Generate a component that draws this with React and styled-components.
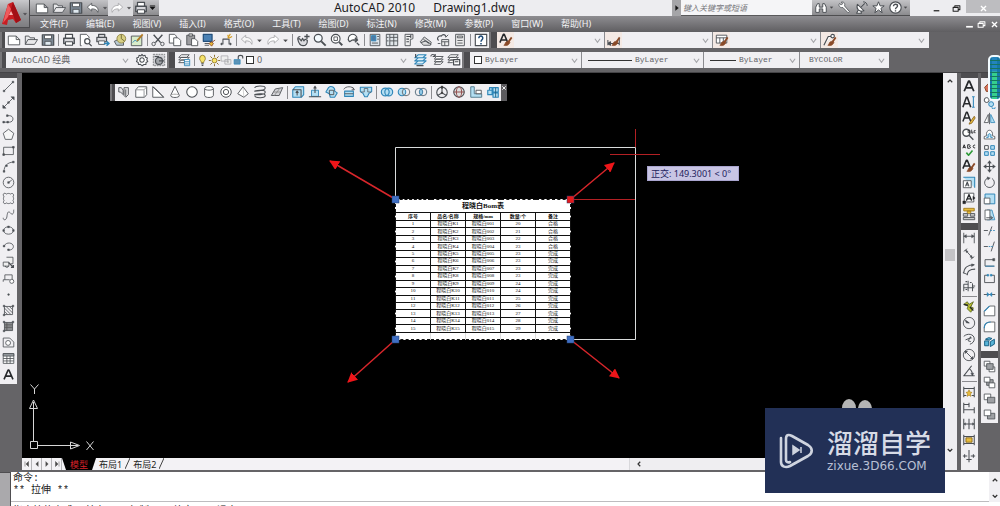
import React from "react";
import styled, { createGlobalStyle, css } from "styled-components";

const INK = "#4b4f54";
const BLUE = "#2f86b8";
const SKY = "#b5dff3";
const BROWN = "#8a4a28";
const GOLD = "#e9bd3c";
const CHROME = "#656467";
const PANEL = "#f0eff2";

const GlobalStyle = createGlobalStyle`
  * { box-sizing: border-box; }
  body {
    margin: 0;
    background: ${CHROME};
    font-family: "Noto Sans", "Noto Sans CJK SC", sans-serif;
    font-size: 9px;
    color: #222;
  }
  button, input, select {
    font: inherit;
    color: inherit;
    margin: 0;
    padding: 0;
    border: 0;
    border-radius: 0;
    background: none;
  }
`;

/* ---------- icons: lists of [path, stroke, fill, stroke width] ---------- */

const brush = [
  ["M14.5 5 11 10", BROWN, "none", 2],
  ["M11.500 9 8.500 10c-2 1-1 3-3 4 3 1 6 0 7-3.500z", BROWN, BROWN, 0.8],
];

const ICONS = {
  newFile: [["M1.500 3.500h9l4 4v6h-13zM10.500 3.500v4h4", INK, "#fff"]],
  open: [["M1.500 13V3.500h4l1.500 2h5v2M1.500 13l3-5.500h11L12 13z", INK, "#e8e8ea"]],
  save: [
    ["M1.500 2h13v12h-13z", INK, "#7b8793", 1.4],
    ["M4 2.500h8v4H4z", INK, "#fff"],
    ["M4.500 9.500h7V14h-7z", INK, "#dfe9f0"],
  ],
  print: [
    ["M4 6V1.500h8V6", INK, "#fff", 1.4],
    ["M2 6h12v6H2z", INK, "#d8d8dc", 1.6],
    ["M4 10h8v4H4z", INK, "#fff", 1.2],
  ],
  preview: [
    ["M3 14.500H1.500v-13h7l3 3V6", INK, "#fff"],
    ["M12.500 9.500a3 3 0 1 1-6 0 3 3 0 0 1 6 0zM11.500 12l3 3", INK, "#fff", 1.4],
  ],
  publish: [
    ["M3 5V1.500h7V5M1 5h11v5H1z", INK, "#d8d8dc", 1.4],
    ["M3 9h7v4H3z", INK, "#fff"],
    ["M9 12h5M12 9.500l3 2.500-3 2.500", BLUE, "none", 1.6],
  ],
  globe: [
    ["M1.500 9.500 7 7l5 2v5H4z", INK, "#b9c9d2"],
    ["M14.500 6.500a5 5 0 1 1-10 0 5 5 0 0 1 10 0z", "#8f8241", "#d8d084"],
    ["M9.500 1.500v5l4 3", "#6d6733", "none"],
  ],
  sheet: [
    ["M1.500 3.500h12v11h-12z", INK, "#d9ecc9"],
    ["M3 11l3-3 2 2 3-3", BLUE, "none"],
    ["M14.500 1.500 8 9", "#b37c26", "none", 2],
  ],
  cut: [
    ["M3 2l8 9M13 2l-8 9", INK, "none", 1.6],
    ["M5 12.500a2 2 0 1 1-4 0 2 2 0 0 1 4 0zM15 12.500a2 2 0 1 1-4 0 2 2 0 0 1 4 0z", INK, "none"],
  ],
  copy: [
    ["M1.500 1.500h6l2 2v8h-8z", INK, "#fff"],
    ["M6.500 5.500h5l3 3v6h-8z", INK, "#fff"],
  ],
  paste: [
    ["M2 2.500h9v11H2z", INK, "#9c9c9f"],
    ["M4.500 1h4v2.500h-4z", INK, "#ddd"],
    ["M7.500 6.500h4l3 3v5h-7z", INK, "#fff"],
  ],
  match: [
    ["M1.500 1.500h10v8h-10z", "#24507c", "#4b81b4", 1.4],
    ["M3 12h5M3 14h5", INK, "none"],
    ["M15 8l-4 3M8 12l3-2 2 2-2 3z", BROWN, GOLD],
  ],
  block: [
    ["M1.500 12.500h3V7h7v5.500h3", INK, "none", 1.2],
    ["M3 11v3M13 11v3", INK, "none", 1.2],
    ["M13 1l-3 5M15 4l-4 2M10 2l1 4", "#d39b1f", "none", 1.2],
  ],
  undo: [["M6.500 2.500 1.500 7l5 4.500V9c4 0 6 1 7 4 1.500-5-2-8-7-8z", "#55585c", "#fff"]],
  redo: [["M9.500 2.500 14.500 7l-5 4.500V9c-4 0-6 1-7 4-1.500-5 2-8 7-8z", "#a8a8ac", "#fff"]],
  undoDim: [["M6.500 2.500 1.500 7l5 4.500V9c4 0 6 1 7 4 1.500-5-2-8-7-8z", "#a8a8ac", "#f6f6f6"]],
  pan: [
    ["M2 7c0-2 1-3 3-3M2 7c1 5 3 7.500 6 7.500 4 0 5-3 5-6L10.500 7 9 9 7.500 6 6 9 4 6.500z", INK, "#dcdce0", 1.3],
    ["M12.500 1v6M9.500 4h6", INK, "none", 1.5],
  ],
  zoom: [
    ["M10.500 6a4.500 4.500 0 1 1-9 0 4.500 4.500 0 0 1 9 0z", INK, "#f5fbff", 1.4],
    ["M9.500 9.500 14.500 14.500", INK, "none", 2.2],
  ],
  zoomWin: [
    ["M11.500 6.500a5 5 0 1 1-10 0 5 5 0 0 1 10 0z", INK, "#fff", 1.3],
    ["M4.500 4.500h4v4h-4z", INK, "none"],
    ["M10.500 10.500 14 14", INK, "none", 2.2],
  ],
  zoomPrev: [
    ["M11.500 6.500a5 5 0 1 0-9 3M1 7l2 3 3-2", INK, "#fff", 1.3],
    ["M6 8h6M9 5.500 12 8l-3 2.500M11 11l3 3", INK, "none", 1.6],
  ],
  props: [
    ["M2.500 1.500h11v13h-11z", INK, "#dbe3ea"],
    ["M4 3h5v6H4z", BLUE, "#4d7aa5"],
    ["M10.500 4h2M10.500 7h2M4.500 11.500h7", INK, "none"],
  ],
  center: [
    ["M1.500 1.500h13v13h-13z", INK, "#dfe4e8"],
    ["M5.500 1.500v13M5.500 5h9M5.500 9h9M10 1.500v13M2 5h2M2 9h2", INK, "none"],
  ],
  palette: [
    ["M3.500 1.500h9v5l-3 1v7h-6z", INK, "#eee"],
    ["M5 4h5M5 7h3M5 10h3M10 2v4", INK, "none", 1.2],
  ],
  sheetset: [
    ["M1.500 10 6 4.500l8 6-1 3.500H5z", INK, "#ddd"],
    ["M2 11l6-2 6 4M5 7l6 5", INK, "none", 1.1],
  ],
  markup: [
    ["M3 8.500c-3-2 0-6 3-5 2-3 6-1 5 1", INK, "none", 1.3],
    ["M6.500 7.500h8v7h-8zM6.500 10h8M10 10v4.500", INK, "#eee"],
    ["M11 5l3-3M2 12h3", INK, "none"],
  ],
  calc: [
    ["M3 1.500h10v13H3z", INK, "#eee"],
    ["M5 3.500h6v2H5zM5 8.500h6M5 11.500h6", INK, "none"],
  ],
  help: [
    ["M1.500 1.500h13v13h-13z", INK, "#fff", 1.3],
    ["M5.500 6c0-3.500 5-3 4.500 0C10 7.500 8 8 8 10M8 11.500v1.500", "#1f4b78", "none", 1.7],
  ],
  textStyle: [["M1 11 5 1.500h1L10 11M2.500 8h6", "#26282b", "none", 1.8], ...brush],
  dimStyle: [["M1 14V8M1 12h13M14 14V6M1 12l3-2v4z", INK, "none", 1.2], ...brush],
  tableStyle: [["M1.500 2.500h12v9h-12zM1.500 5.500h12M5.500 5.500v6M9.500 5.500v6", INK, "#fff"], ...brush],
  leaderStyle: [["M1 14 6 4h3M13 3.500a2 2 0 1 1-4 0 2 2 0 0 1 4 0z", INK, "#fff", 1.3], ...brush],
  gear: [
    ["M8 1.500l1.200 1.800 2.300-.6.500 2.200 2.200.8-.8 2 1.200 2-2 1.200-.1 2.300-2.300-.1L8 14.500l-1.800-1.500-2.300.2-.2-2.300-2-1.200 1-2-.8-2 2.200-.8.5-2.200 2.200.6z", INK, "#fff", 1.2],
    ["M10.500 8a2.500 2.500 0 1 1-5 0 2.500 2.500 0 0 1 5 0z", INK, "none", 1.2],
  ],
  workspace: [
    ["M1.500 1.500h13v13h-13z", "#77797c", "#d0d0d4", 1, "2 1"],
    ["M12 9a4 4 0 1 1-8 0 4 4 0 0 1 8 0zM3 4h5M8 9h6", INK, "#a4a7ab", 1.3],
  ],
  layers: [
    ["M5 2h9l-3 3H2zM5 5h9l-3 3H2zM5 8h6l-3 3H2z", INK, "#fff"],
    ["M8.500 7.500h6v7h-6zM8.500 10h6M8.500 12.500h6", BLUE, "#fff"],
  ],
  layerMake: [["M6 2h9l-4 3.500H2zM6 5.500h9L11 9H2zM6 9h9l-4 3.500H2z", BLUE, "#dff0f8", 1.2], ["M4 14.500h8M3 1v4", INK, "none", 1.3]],
  layerPrev: [["M7 4h8l-3 3H5zM7 7h8l-3 3H5zM7 10h8l-3 3H5z", INK, "#fff"], ["M1 4c0-3 4-3 5 0M6 1v3H3", INK, "none", 1.2]],
  layerState: [["M4 2h9l-3 3H1zM4 5h9l-3 3H1zM4 8h5l-3 3H1z", INK, "#fff"], ["M7.500 7.500h7v6h-7zM9 10h4", INK, "#fff", 1.4]],
  bulb: [["M11.500 5.500c0 2.500-2 3-2 5h-3c0-2-2-2.500-2-5a3.500 4 0 0 1 7 0z", "#877325", "#f6e36b"], ["M6.500 12h3M7 14h2", INK, "none", 1.4]],
  sun: [["M11 8a3 3 0 1 1-6 0 3 3 0 0 1 6 0z", "#8c6e1b", "#f6e36b"], ["M8 1v2.500M8 12.500V15M1 8h2.500M12.500 8H15M3 3l2 2M11 11l2 2M13 3l-2 2M5 11l-2 2", "#82621b", "none", 1.1]],
  vpFreeze: [["M1.500 2.500h9v7h-9zM6.500 7.500h8v6h-8z", "#a5a5a9", "#eee"], ["M9 10.500h3M10.500 9v3", "#aaa", "none"]],
  lock: [["M1.500 7.500h8v6h-8z", BLUE, "#5c93b7"], ["M7 7V4c0-3 6-3 6 0v2", INK, "none", 1.5]],
  line: [["M2.500 13.500 13.500 2.500", INK, "none"], ["M1.500 12.500h2v2h-2zM12.500 1.500h2v2h-2z", INK, INK, 0.6]],
  xline: [["M2 14 14 2", INK, "none"], ["M1 15v-4l4 4zM15 1v4l-4-4zM7 7h2v2H7z", INK, INK, 0.6]],
  pline: [["M2 12.500h7c6 0 6-8 0-8H7", INK, "none"], ["M1 11.500h2v2H1zM6 11.500h2v2H6zM5.500 3.500h2v2h-2z", INK, INK, 0.6]],
  polygon: [["M8 1.500 14.500 6.500 12 14H4L1.500 6.500z", INK, "#f6f6f6"]],
  rect: [["M2 4h12v9H2z", INK, "none"], ["M1 12h2v2H1zM13 3h2v2h-2z", INK, INK, 0.8]],
  arc: [["M2.500 14C2.500 8 6 3 14 2.500", INK, "none"], ["M1.500 13h2v2h-2zM4.500 6h2v2h-2zM13 1.500h2v2h-2z", INK, INK, 0.6]],
  circle: [["M14.500 8a6.500 6.500 0 1 1-13 0 6.500 6.500 0 0 1 13 0zM8 8l4-3", INK, "none"], ["M7 7h2v2H7z", INK, INK, 0.6]],
  cloud: [["M2.500 6C0 2 3 .5 5.500 2.500 7 1.500 9 1.500 10.500 2.500 13 .5 15.500 3 13.500 6c1 1 1 3 0 4.500 2 3-.5 5-3 3-1.500 1-3.500 1-5 0-2.500 2-5 0-3-3-1-1.500-1-3.500 0-4.500z", INK, "none"]],
  spline: [["M1.500 12c0 4 4 3 4.500-1S7 4 9 5s3 4 4.500 2S14 4 14.500 2", INK, "none"]],
  ellipse: [["M14 8c0 6-12 6-12 0s12-6 12 0z", INK, "none"], ["M1 7h2v2H1zM13 7h2v2h-2zM7 2.500h2v2H7z", INK, INK, 0.6]],
  ellArc: [["M3 7c2-5 11-4 11 1 0 4-5 5-7 4", INK, "none"], ["M1.500 6.500h2v2h-2zM7 11h2v2H7z", INK, INK, 0.6]],
  insert: [["M5.500 1.500h8v8h-3M1.500 7.500h7v5h-7z", INK, "#eee"], ["M8 8l6 6M14 11v3h-3", INK, "none", 1.6], ["M4 12a2 2 0 1 0 4 0", INK, "none"]],
  makeBlock: [["M3.500 3.500h9v6M1.500 12V9.500h8M3.500 3.500v6", INK, "none"], ["M14.500 11.500a2.500 2.500 0 1 1-5 0 2.500 2.500 0 0 1 5 0z", INK, "#fff"]],
  point: [["M7.300 7.300h1.500v1.500H7.300z", INK, INK]],
  hatch: [["M3 3h10v10H3zM3 9l4 4M3 5l8 8M5 3l8 8M9 3l4 4", INK, "none"], ["M1.500 1.500h2v2h-2zM12.500 1.500h2v2h-2zM1.500 12.500h2v2h-2z", INK, INK, 0.6]],
  gradient: [["M3 3h10v10H3z", INK, "#8b8d90"], ["M3 6h10M3 9h10M6 3v10", "#555", "none"], ["M1.500 1.500h2v2h-2zM12.500 1.500h2v2h-2zM1.500 12.500h2v2h-2z", INK, INK, 0.6]],
  region: [["M1.500 2.500h8l5 5v6h-13z", INK, "none"], ["M10.500 8.500a3 3 0 1 1-6 0 3 3 0 0 1 6 0z", INK, "#fff"]],
  table: [["M1.500 2h13v12h-13zM1.500 8h13M1.500 11h13M6 5v9M10 5v9", INK, "#fff"], ["M1.500 2h13v3h-13z", INK, "#9ba0a5"]],
  mtext: [["M2.500 14 7.500 2.500h1l5 11.500M4.500 10h7", "#26282b", "none", 2]],
  stext: [["M1 14 5 2.500h1l4 11.500M2.500 10h6", "#26282b", "none", 1.8], ["M13 2.500v11M11.500 2h3M11.500 14h3", BLUE, "none", 1.2]],
  editText: [["M1 12 5 1.500h1L10 12M2.500 8h6", "#26282b", "none", 1.7], ["M14 6 9 13l-1 2 3-1 4-6z", "#8a6420", GOLD, 1]],
  findText: [["M9 6.500a4 4 0 1 1-8 0 4 4 0 0 1 8 0zM8 9.500l5 5", INK, "#fff", 1.6], ["M7 6.500h2v-3H7zM11 3v4h1.500V5M15.500 4h-1.500v2.500h1.500", "#26282b", "none", 0.9]],
  spell: [["M1 6l1.500-4L4 6M1.500 5h2M6.500 2v4h2c2 0 1-2 0-2 1 0 1-2 0-2zM15 2.500c-3-1-3 4 0 3", "#26282b", "none", 1.1], ["M5 11l2.500 3L12 8.500", "#2e9a38", "none", 1.8]],
  scaleText: [["M1.500 2.500h13v12", BLUE, SKY, 1.2], ["M1.500 6.500h9v8h-9z", INK, "#fff"], ["M4 13l2-5 2 5M4.500 11.500h3", INK, "none", 1.2]],
  justify: [["M2.500 2.500h11v10h-11z", INK, "#fff"], ["M5 11l3-7 3 7M6 9h4", "#26282b", "none", 1.5], ["M1 11.500h3v3H1zM12.500 6 15 8l-2.500 2z", "#26282b", "#26282b", 0.5]],
  convert: [["M2 1.500h12v3H2zM6 4.500h4v3H6z", "#a07a1f", GOLD], ["M1.500 7.500h5v3h-5zM9.500 7.500h5v3h-5zM1.500 12h13v2.500h-13z", INK, "#ccc"]],
  dimLinear: [["M2 2v12M14 2v12M2 6h12", INK, "none"], ["M2 6l3-2v4zM14 6l-3-2v4z", INK, INK, 0.4]],
  dimAligned: [["M2 5l4-3M10 14l4-3M4 3.500 12 12.500", INK, "none"], ["M4 3.500l1 3 2-1.500zM12 12.500l-1-3-2 2z", INK, INK, 0.4]],
  dimArc: [["M2 12C2 5 7 2 14 2M6 14c0-5 3-7 9-7M1 11l5 2", INK, "none", 1.2], ["M14 2l-3-1v3z", INK, INK, 0.6]],
  dimOrd: [["M2 14V6h5M2 10h12M7 14V2M12 14V5M12 8h3", INK, "none", 1.1], ["M4 3h2M9 4h2M4 12h2", INK, "none", 1.4]],
  dimQuick: [["M2 5l4-3 2 3 5-3-3 6 3 1-3 5-4-4 1-3z", "#5d6c22", "#b9bd2e", 1], ["M2 5l5 1M9 8l4 4", "#26282b", "none", 1.5]],
  dimRadius: [["M14.500 8a6.500 6.500 0 1 1-13 0 6.500 6.500 0 0 1 13 0zM3 5l5 3", INK, "none"], ["M4 4.500 8.500 8 5 8z", INK, INK, 0.5]],
  dimJog: [["M2 5c4-4 12-3 12 3 0 3-2 5-5 6M4 9l5-2-2 3 3 1", INK, "none", 1.1], ["M8.500 7.500 9.500 5l1.500 2z", INK, INK, 0.4]],
  dimDia: [["M14.500 8a6.500 6.500 0 1 1-13 0 6.500 6.500 0 0 1 13 0zM4 4l8 8", INK, "none"], ["M3.500 3.500h3l-3 3zM12.500 12.500h-3l3-3z", INK, INK, 0.4]],
  dimAngle: [["M11 2 2 13.500h12.500M8 5c3 2 4 5 4 8", INK, "none", 1.2], ["M12 13.500l-2-3h3.500z", INK, INK, 0.4]],
  dimUpdate: [["M2 2v12M14 2v12M2 4h12M2 12h3M11 12h3", INK, "none", 1.2], ["M8 5.500l1 2.500 2.500.5-2 1.500.5 3-2-1.500-2 1.500.5-3-2-1.500L7 8z", "#ad851f", GOLD, 0.8]],
  baseline: [["M2 2v12M8 2v5M14 7v7M2 4h6M2 10h12", INK, "none", 1.2]],
  continued: [["M2 2v12M8 2v12M14 2v12M2 8h12", INK, "none", 1.2], ["M2 8l2-1.500v3zM14 8l-2-1.500v3z", INK, INK, 0.4]],
  dimSpace: [["M2 2v12M14 2v12M2 4h12M2 12h12", INK, "none", 1.2], ["M4.500 5.500h7v5h-7z", "#866312", GOLD]],
  dimBreak: [["M8 1v14M1 8h5M10 8h5M3 6v4M13 6v4M5 12h6", INK, "none", 1.2]],
  erase: [["M2 9l6-6 5 4-6 7H4z", BROWN, "#d6705c", 1.2]],
  copyObj: [["M7.500 5a3 3 0 1 1-6 0 3 3 0 0 1 6 0z", INK, "#fff", 1.2], ["M13 10a3 3 0 1 1-6 0 3 3 0 0 1 6 0zM15 14a2 2 0 1 1-4 0", BLUE, SKY, 1.2]],
  mirror: [["M6.500 3v10h-5z", INK, "#fff"], ["M9.500 3v10h5z", BLUE, SKY], ["M8 1v14", INK, "none"]],
  offset: [["M1.500 13.500v-3l3-1c-2-9 9-9 7 0l3 1v3z", INK, "#fff"], ["M4 11.500h2.500c-2-6 5-6 3 0H12", BLUE, SKY, 1.2]],
  array: [["M2 2h4.500v4.500H2z", INK, "#fff", 1.2], ["M9.500 2H14v4.500H9.500zM2 9.500h4.500V14H2zM9.500 9.500H14V14H9.500z", BLUE, SKY, 1.2]],
  move: [["M8 2v12M2 8h12", INK, "none", 1.4], ["M8 .5 10.500 4h-5zM8 15.500 10.500 12h-5zM.5 8 4 5.500v5zM15.500 8 12 5.500v5z", INK, INK, 0.3]],
  rotate: [["M6 2.500a6 6 0 1 0 5 .5", INK, "none", 1.1], ["M5 1l4 1.500L6 5z", INK, INK, 0.4]],
  scale: [["M2.500 2.500h12v12h-12z", BLUE, SKY, 1.2], ["M1.500 7.500h7v7h-7z", INK, "#fff"]],
  stretch: [["M5 2.500h6l3.500 12H5z", BLUE, SKY], ["M2.500 2.500h6v12h-6z", INK, "#fff"], ["M4 12h7M9 10l3 2-3 2", INK, "none", 1.1]],
  trim: [["M1 8h5M11 3 7 14", INK, "none", 1.1], ["M9 8h2M12.500 8h2", BLUE, "none", 1.1]],
  extend: [["M1 8h5M14 2l-4 12", INK, "none", 1.1], ["M7 8h2M10 8h2", BLUE, "none", 1.1]],
  breakAt: [["M13 4.500H2.500v8H14", INK, "none", 1.1], ["M12 3h2.500v3H12z", INK, INK, 0.5], ["M3 12.500h11", BLUE, "none", 1.1]],
  breakTwo: [["M6 4H2v9h12V4h-4", INK, "none", 1.1], ["M5 3h2v2H5zM9 3h2v2H9z", BLUE, BLUE, 0.8]],
  join: [["M1 8h14", INK, "none", 1.1], ["M5 5.500 8 8l-3 2.500zM11 5.500 8 8l3 2.500z", BLUE, BLUE, 0.5]],
  chamfer: [["M1.500 14.500V9L8 2.500h6.500v12z", INK, "#fff"], ["M1.500 9 8 2.500", BLUE, "none", 1.4]],
  fillet: [["M1.500 14.500V10c0-5 3-7.500 8-7.500h5v12z", INK, "#fff"], ["M1.500 10c0-5 3-7.500 8-7.500", BLUE, "none", 1.4]],
  explode: [["M2 6h5v6H2zM9 7l5-3v6l-5 3zM3 4l4-2 4 1-3 2z", "#175f83", "#58b4d8", 1.2]],
  front: [["M1.500 1.500h7v6h-7zM7.500 8.500h7v6h-7z", INK, "#fff"], ["M4.500 4.500h8v7h-8z", INK, "#9ea0a4"]],
  back: [["M4.500 4.500h8v7h-8z", INK, "#9ea0a4"], ["M1.500 1.500h7v6h-7zM7.500 8.500h7v6h-7z", INK, "#fff"]],
  above: [["M1.500 2.500h8v7h-8z", INK, "#fff"], ["M5.500 6.500h9v7h-9z", INK, "#9ea0a4"]],
  under: [["M5.500 6.500h9v7h-9z", INK, "#9ea0a4"], ["M1.500 2.500h8v7h-8z", INK, "#fff"]],
  polysolid: [["M2 3h3l2 3v5l-3-3H2zM8 3h5v8l-3 3-2-2z", INK, "#e2e2e5"], ["M10 5v8", INK, "none"]],
  box: [["M2 5.500 5 2h9.500v9L12 14H2z", INK, "#fff"], ["M2 5.500h9.500L14 2.500M11.500 6v8", "#8a8d90", "none"]],
  wedge: [["M2 2v12h12.500z", INK, "#fff"], ["M2 2l3 2 9.500 10", INK, "none"]],
  cone: [["M8 1.500 3 12c0 3 10 3 10 0z", INK, "#fff"], ["M3 12c1-2 9-2 10 0", "#999", "none"]],
  sphere: [["M14 8A6 6 0 1 1 2 8a6 6 0 0 1 12 0z", INK, "#fff", 1.2]],
  cylinder: [["M3 4v8c0 3 10 3 10 0V4c0-3-10-3-10 0z", INK, "#fff"], ["M3 4c0 2.500 10 2.500 10 0", INK, "none"]],
  torus: [["M14 8A6 6 0 1 1 2 8a6 6 0 0 1 12 0zM11 8a3 3 0 1 1-6 0 3 3 0 0 1 6 0z", INK, "#fff", 1.1]],
  pyramid: [["M8 2l6 8-5 4-7-4z", INK, "#fff"], ["M8 2l1 12", "#aaa", "none", 0.6]],
  helix: [["M2 3.500c0-3 12-3 12 0S2 7 2 7s12-3 12 1-12 3-12 3 12-3 12 1-12 3-12 0", INK, "none", 1.2]],
  plane: [["M1.500 12 6 4.500 14.500 3l-4 9z", INK, "#d4d4d8"], ["M4 8h8M5 12l6-8", "#888", "none"]],
  extrude: [["M2 5.500 5 2h9.500v9L12 14H2z", BLUE, SKY, 1.2], ["M2 5.500h9.500V14M7 12V8M5.500 9 7 7l1.500 2", INK, "none", 1.2]],
  pressPull: [["M4 6h8v7H4z", BLUE, SKY], ["M1 13.500h14M8 9V2M6.500 4 8 1.500 9.500 4", INK, "none", 1.2]],
  sweep: [["M4 3c3-3 8 0 7 4l3 2-3 5H6l-1-4-4-2z", BLUE, SKY, 1.2], ["M5 6h5v5H5z", INK, "none"]],
  revolve: [["M3 7h10v6H3z", BLUE, SKY, 1.2], ["M2 5c2-4 10-4 12 0M12 2.500l2 3h-3M3 10h10", INK, "none"]],
  loft: [["M1.500 2.500h13v5l-3 2-2 4h-3l-2-4-3-2z", BLUE, SKY, 1.2], ["M2 8h4V4h4v4h4", INK, "none", 0.8]],
  union: [["M10.500 8a4.500 4.500 0 1 1-9 0 4.500 4.500 0 0 1 9 0zM14.500 8a4.500 4.500 0 1 1-9 0 4.500 4.500 0 0 1 9 0z", BLUE, SKY, 1.3]],
  subtract: [["M10 8a4.300 4.300 0 1 1-8.600 0 4.300 4.300 0 0 1 8.600 0z", BLUE, SKY, 1.2], ["M14.600 8a4.300 4.300 0 1 1-8.600 0 4.300 4.300 0 0 1 8.600 0z", "#6b6f73", "none", 1.1]],
  intersect: [["M10 8a4.300 4.300 0 1 1-8.600 0 4.300 4.300 0 0 1 8.600 0zM14.600 8a4.300 4.300 0 1 1-8.600 0 4.300 4.300 0 0 1 8.600 0z", "#5a6f80", "none", 1.1], ["M8 4.500c2 2 2 5 0 7-2-2-2-5 0-7z", BLUE, SKY, 1]],
  gizmoMove: [["M14 8.500a6 6 0 1 1-12 0 6 6 0 0 1 12 0zM8 2v7M8 9l-5 3M8 9l5 3", INK, "none", 1.3], ["M7 1h2v3H7zM7 8h2v2H7z", "#3c3c3c", "#3c3c3c", 0.3]],
  gizmoRot: [["M14 8A6 6 0 1 1 2 8a6 6 0 0 1 12 0z", INK, "#ddd", 1.3], ["M11 8c0 8-6 8-6 0s6-8 6 0zM2 8h12", "#914b4b", "none", 1.1]],
  align3d: [["M2 2v12h12.500v-4H6V2z", "#487287", SKY], ["M8 6h6v4H8z", INK, "#fff"]],
  array3d: [["M2 6h5v5H2zM8 3h6v5H8zM8 9h6v5H8zM4 3h3v3H4z", BLUE, SKY, 1.3], ["M11 3v11", "#225b7c", "none"]],
  binoculars: [["M2 13V7l2-4h2v4h4V3h2l2 4v6h-4V9H6v4z", INK, "#fff", 1.1]],
  key: [["M8 6 14 13l-1.500 1.500L6 8C2 9 0 5 2 3l2 2 2-2-2-1.500c4-1 5 2 4 4.500z", INK, "#fff", 1]],
  satellite: [["M3 4c-2 6 2 10 8 8zM7 8l5-5M4 11l-2 4h6l-1-3", INK, "#fff", 1.3], ["M10 1c3 0 5 2 5 5", INK, "none", 1.2]],
  star: [["M8 1l2 5h5l-4 3 1.500 5.500L8 11l-4.500 3.500L5 9 1 6h5z", INK, "#fff", 1.2]],
  helpRound: [["M15 8A7 7 0 1 1 1 8a7 7 0 0 1 14 0z", INK, "#fff", 1.4], ["M5.500 6.500c0-3.500 5-3 5-.5 0 2-2.500 2-2.500 4M8 11.500v1.500", INK, "none", 1.7]],
  caret: [["M4.500 6.500h7L8 10.500z", "#4a4a4d", "#4a4a4d", 0.5]],
  caretBar: [["M2 6.500h12L8 13zM2 3.500h12", "#111", "#111", 1.2]],
  play: [["M5 3v10l6-5z", "#111", "#111", 0.5]],
  chevronUp: [["M3.500 10.500 8 6l4.500 4.500", "#333", "none", 2.4]],
  chevronDown: [["M3.500 6 8 10.500 12.500 6", "#333", "none", 2.4]],
  chevronLeft: [["M10.500 3.500 6 8l4.500 4.500", "#333", "none", 2.4]],
  minimize: [["M3 12h10", "#222", "none", 2.2]],
  restore: [["M2 6h9v7H2zM5 6V3h9v7h-3", "#222", "none", 1.8]],
  close: [["M3.500 3.500l9 9M12.500 3.500l-9 9", "#fff", "none", 2.4]],
  minimizeLight: [["M2 12h12", "#fff", "none", 3]],
  restoreLight: [["M2 6h9v7H2zM5 6V3h9v7h-3", "#fff", "none", 1.8]],
  first: [["M11 3v10L6 8zM4 3v10", "#4a4a4a", "#4a4a4a", 1]],
  prev: [["M10.500 3v10l-5-5z", "#4a4a4a", "#4a4a4a", 0.6]],
  next: [["M5.500 3v10l5-5z", "#4a4a4a", "#4a4a4a", 0.6]],
  last: [["M5 3v10l5-5zM12 3v10", "#4a4a4a", "#4a4a4a", 1]],
};

const Glyph = styled.svg`
  display: block;
  flex: none;
  width: ${(p) => p.$size}px;
  height: ${(p) => p.$size}px;
`;

function Icon({ name, size = 14 }) {
  return (
    <Glyph viewBox="0 0 16 16" $size={size} aria-hidden="true">
      {ICONS[name].map(([d, stroke, fill, width = 1, dash], i) => (
        <path key={i} d={d} stroke={stroke} fill={fill} strokeWidth={width} strokeDasharray={dash} strokeLinejoin="round" />
      ))}
    </Glyph>
  );
}

/* ---------- shared controls ---------- */

const ToolButton = styled.button`
  display: flex;
  align-items: center;
  justify-content: center;
  flex: none;
  width: ${(p) => p.$w || 17}px;
  height: 16px;
  background: ${(p) => p.$bg || "none"};
`;

const Tool = ({ name, w, size, bg, label }) => (
  <ToolButton type="button" aria-label={label || name} $w={w} $bg={bg}>
    <Icon name={name} size={size} />
  </ToolButton>
);

const Divider = styled.i`
  flex: none;
  ${(p) =>
    p.$row
      ? css`height: 1px; margin: 2px 1px;`
      : css`width: 1px; margin: 2px 1px 2px 2px;`}
  background: #8b8b8f;
`;

const Tools = ({ list, w, row, size }) =>
  list.map((name, i) => {
    if (name === "|") return <Divider key={i} $row={row} />;
    if (name === "caret") return <Tool key={i} name="caret" w={9} size={9} label="展开" />;
    return <Tool key={i} name={name} w={w} size={size} />;
  });

/* ---------- header ---------- */

const Window = styled.div`
  position: relative;
  display: flex;
  flex-direction: column;
  height: 100vh;
  overflow: hidden;
  background: ${CHROME};
`;

const Header = styled.header`
  display: flex;
  flex: none;
  background: #626164;
`;

const LogoButton = styled.button`
  display: flex;
  align-items: center;
  flex: none;
  width: 30px;
  height: 28px;
  background: linear-gradient(#c9c9cc, #98989b 50%, #7d7d80);
  border-right: 1px solid #4c4c4f;
  border-bottom: 1px solid #4c4c4f;
`;

const LogoArt = styled.svg`
  width: 21px;
  height: 26px;
`;

const HeaderMain = styled.div`
  flex: 1;
  min-width: 0;
`;

const TitleBar = styled.div`
  display: flex;
  height: 16px;
  background: #ededf0;
`;

const GrayStrip = styled.div`
  display: flex;
  align-items: center;
  flex: none;
  padding: 0 3px;
  background: linear-gradient(#c3c3c6, #8b8b8e);
  border-bottom: 1px solid #4e4e50;
`;

const Title = styled.h1`
  flex: 1;
  display: flex;
  justify-content: center;
  gap: 18px;
  margin: 0;
  padding-left: 18px;
  font: 400 12px/16px "Noto Sans", sans-serif;
  color: #1b1b1d;
  white-space: nowrap;
`;

const SearchBox = styled.form`
  display: flex;
  flex: none;
  width: 140px;
  border-bottom: 1px solid #59595b;
`;

const SearchInput = styled.input`
  flex: 1;
  min-width: 0;
  padding-left: 2px;
  background: #f5f5f7;
  font-size: 8px;
  font-style: italic;
  &::placeholder { color: #77777b; opacity: 1; }
`;

const WindowControls = styled.div`
  display: flex;
  justify-content: space-between;
  flex: none;
  width: 90px;
  height: 13px;
  padding-left: 17px;
  overflow: hidden;
`;

const MenuBar = styled.nav`
  display: flex;
  align-items: center;
  height: 16px;
  padding-left: 1px;
  background: linear-gradient(#8e8d91, #5f5e61);
`;

const MenuButton = styled.button`
  padding: 0 9px;
  font-size: 9px;
  line-height: 16px;
  color: #f2f2f4;
  white-space: nowrap;
`;

const DocControls = styled.div`
  display: flex;
  margin-left: auto;
`;

/* ---------- toolbar rows ---------- */

const ToolRows = styled.div`
  display: flex;
  flex-direction: column;
  flex: none;
  gap: 4px;
  padding-bottom: 4px;
  border-bottom: 1px solid #454447;
`;

const ToolRow = styled.div`
  display: flex;
  align-items: stretch;
  height: 16px;
`;

const Grip = styled.i`
  flex: none;
  width: ${(p) => p.$w || 8}px;
  background: #4e4d50;
  border-left: 2px solid #78777a;
`;

const Panel = styled.div`
  display: flex;
  flex: none;
  align-items: stretch;
  width: ${(p) => (p.$w ? p.$w + "px" : "auto")};
  background: ${PANEL};
`;

const Combo = styled.label`
  display: flex;
  align-items: center;
  flex: none;
  width: ${(p) => p.$w}px;
  padding-left: ${(p) => p.$pad || 0}px;
  padding-right: 3px;
  border-right: 1px solid ${(p) => (p.$line ? "#8b8b8f" : "transparent")};
`;

const ComboSelect = styled.select`
  flex: 1;
  min-width: 0;
  appearance: none;
  font-family: ${(p) => (p.$mono ? '"Liberation Mono", monospace' : "inherit")};
  font-size: ${(p) => (p.$mono ? 8 : 9)}px;
  line-height: 16px;
  color: #626266;
`;

const ArrowGlyph = styled.svg`
  flex: none;
  width: 7px;
  height: 7px;
`;

const Swatch = styled.i`
  width: 8px;
  height: 8px;
  margin-right: 3px;
  border: 1px solid #333;
  background: #fff;
`;

const LineSample = styled.i`
  width: ${(p) => p.$w}px;
  height: 1px;
  margin-right: 3px;
  background: #333;
`;

function Dropdown({ w, pad, line, mono, label, value = "", children }) {
  return (
    <Combo $w={w} $pad={pad} $line={line}>
      {children}
      <ComboSelect $mono={mono} aria-label={label} defaultValue={value}>
        <option value={value}>{value}</option>
      </ComboSelect>
      <ArrowGlyph viewBox="0 0 8 8" aria-hidden="true">
        <path d="M1 2l3 4 3-4" fill="none" stroke="#a2a2a6" strokeWidth="1.2" />
      </ArrowGlyph>
    </Combo>
  );
}

/* ---------- workspace ---------- */

const Workspace = styled.div`
  display: flex;
  flex: 1;
  min-height: 0;
  padding-bottom: 2px;
`;

const Dock = styled.aside`
  flex: none;
  width: ${(p) => p.$w}px;
  padding-left: ${(p) => p.$pad || 0}px;
`;

const VBar = styled.div`
  display: flex;
  flex-direction: column;
  width: 17px;
  padding-bottom: ${(p) => p.$end || 1}px;
  background: ${PANEL};
  border-top: ${(p) => p.$top || 5}px solid #4e4d50;
`;

const Document = styled.main`
  flex: 1;
  min-width: 0;
  display: flex;
  flex-direction: column;
`;

const CanvasRow = styled.div`
  display: flex;
  flex: 1;
  min-height: 0;
`;

const Canvas = styled.section`
  position: relative;
  flex: 1;
  overflow: hidden;
  background: #000;
`;

const VScroll = styled.div`
  display: grid;
  grid-template-rows: 16px 47fr 12px 53fr 16px;
  justify-items: center;
  width: 14px;
  background: #efeef1;
`;

const Thumb = styled.i`
  grid-row: 3;
  width: 10px;
  height: 12px;
  background: #c4c3c6;
`;

const ScrollEnd = styled.div`
  grid-row: 5;
`;

const Drawing = styled.svg`
  position: absolute;
  inset: 0;
  width: 100%;
  height: 100%;
`;

const Floating = styled.div`
  position: absolute;
  left: 88px;
  top: 11px;
  display: flex;
  height: 17px;
  background: ${PANEL};
`;

const FloatEnd = styled.button`
  width: 6px;
  height: 17px;
  padding-bottom: 9px;
  background: #5d5c5f;
`;

const BomTable = styled.table`
  position: absolute;
  left: 373px;
  top: 126px;
  width: 176px;
  height: 141px;
  table-layout: fixed;
  border-collapse: collapse;
  background: #fff;
  font-family: "Liberation Serif", "Noto Sans CJK SC", serif;
  font-size: 5px;
  line-height: 6px;
  color: #111;
  text-align: center;
  th, td {
    padding: 0;
    border: 1px solid #111;
    overflow: hidden;
    white-space: nowrap;
  }
  thead tr:first-child th {
    height: 13px;
    font-size: 7px;
    line-height: 10px;
  }
  thead tr:last-child th { height: 8px; }
  tfoot td { height: 7px; border-color: #ddd; border-top-color: #111; border-bottom: 1px dashed #111; }
  tr > :first-child { border-left: 1px dashed #111; }
  tr > :last-child { border-right: 1px dashed #111; }
  thead tr:first-child th { border-top: 1px dashed #111; }
`;

const Tooltip = styled.output`
  position: absolute;
  left: 625px;
  top: 93px;
  padding: 0 7px 0 3px;
  border: 1px solid #a9a5cf;
  background: #c8c5e4;
  font-size: 9px;
  line-height: 13px;
  color: #22225c;
  white-space: nowrap;
`;

const Ucs = styled.svg`
  position: absolute;
  left: 0;
  bottom: 0;
  width: 78px;
  height: 78px;
`;

const SheetRow = styled.div`
  display: flex;
  align-items: stretch;
  flex: none;
  height: 12px;
  background: #f3f2f5;
`;

const NavButton = styled.button`
  display: flex;
  align-items: center;
  justify-content: center;
  width: 10px;
  border-right: 1px solid #b5b5b8;
`;

const SheetTab = styled.button`
  padding: 0 3px;
  font-size: 9px;
  line-height: 11px;
  color: #222;
  ${(p) =>
    p.$active &&
    css`
      padding: 0 8px;
      color: #d6222a;
      background: #000;
      clip-path: polygon(0 0, 100% 0, calc(100% - 4px) 100%, 4px 100%);
    `}
`;

const Slash = styled.svg`
  width: 5px;
  height: 11px;
`;

const HScroll = styled.div`
  display: flex;
  align-items: center;
  flex: none;
  width: 328px;
  margin-left: auto;
  padding-left: 5px;
  border-left: 1px solid #d8d8db;
  background: #efeef1;
`;

/* ---------- command window ---------- */

const Command = styled.section`
  display: flex;
  flex: none;
  height: 34px;
  overflow: hidden;
  background: #fff;
`;

const CommandGrip = styled.i`
  width: 11px;
  background: #aaa9ac;
  border: solid #4f4e51;
  border-width: 1px 1px 0 0;
`;

const CommandBody = styled.div`
  flex: 1;
  min-width: 0;
  font-family: "Liberation Mono", "Noto Sans CJK SC", monospace;
  font-size: 10px;
  line-height: 12px;
`;

const History = styled.p`
  height: 30px;
  margin: 0;
  padding: 1px 0 0 2px;
  border-bottom: 1px solid #bdbcbf;
  white-space: pre-line;
`;

const Prompt = styled.input`
  display: block;
  width: 60%;
  height: 14px;
  padding-left: 2px;
`;

const CommandScroll = styled.div`
  display: flex;
  flex-direction: column;
  justify-content: space-between;
  align-items: center;
  width: 11px;
  height: 30px;
  background: #f1f0f3;
`;

/* ---------- overlays ---------- */

const Watermark = styled.aside`
  position: absolute;
  right: 55px;
  bottom: 13px;
  display: flex;
  align-items: center;
  gap: 13px;
  width: 180px;
  height: 85px;
  padding-left: 14px;
  background: #223056;
  color: #d7dbe6;
`;

const WatermarkText = styled.div`
  strong {
    display: block;
    font: 500 26px/30px "Liberation Sans", "Noto Sans CJK SC", sans-serif;
  }
  span {
    display: block;
    font: 400 12px/14px "DejaVu Sans", sans-serif;
    color: #b9c0d4;
  }
`;

const WatermarkLogo = styled.svg`
  width: 35px;
  height: 36px;
`;

const Ears = styled.svg`
  position: absolute;
  left: 76px;
  top: -9px;
  width: 32px;
  height: 9px;
`;

const Meter = styled.div`
  position: absolute;
  right: -2px;
  top: 55px;
  width: 14px;
  height: 46px;
  border: 2px solid #f2fbff;
  border-radius: 5px;
  background: repeating-linear-gradient(transparent 0 3px, #16745f 3px 4px),
    linear-gradient(90deg, #1577a8 0 2px, transparent 2px 7px, #1577a8 7px),
    linear-gradient(#2384bd 0 14px, #35cf8d 15px);
`;

/* ---------- data ---------- */

const MENUS = ["文件(F)", "编辑(E)", "视图(V)", "插入(I)", "格式(O)", "工具(T)", "绘图(D)", "标注(N)", "修改(M)", "参数(P)", "窗口(W)", "帮助(H)"];

const STANDARD = ["newFile", "open", "save", "|", "print", "preview", "publish", "globe", "sheet", "|", "cut", "copy", "paste", "match", "block", "|", "undoDim", "caret", "redo", "caret", "|", "pan", "zoom", "zoomWin", "zoomPrev", "|", "props", "center", "palette", "sheetset", "markup", "calc", "|", "help"];

const DRAW = ["line", "xline", "pline", "polygon", "rect", "arc", "circle", "cloud", "spline", "ellipse", "ellArc", "insert", "makeBlock", "point", "hatch", "gradient", "region", "table", "mtext"];

const TEXT = ["mtext", "stext", "editText", "findText", "spell", "textStyle", "scaleText", "justify", "convert"];

const DIMENSION = ["dimLinear", "dimAligned", "dimArc", "dimOrd", "|", "dimQuick", "dimRadius", "dimJog", "dimDia", "dimAngle", "|", "dimUpdate", "baseline", "continued", "dimSpace", "dimBreak"];

const MODIFY = ["erase", "copyObj", "mirror", "offset", "array", "move", "rotate", "scale", "stretch", "trim", "extend", "breakAt", "breakTwo", "join", "chamfer", "fillet", "explode"];

const MODELING = ["polysolid", "box", "wedge", "cone", "sphere", "cylinder", "torus", "pyramid", "helix", "plane", "|", "extrude", "pressPull", "sweep", "revolve", "loft", "|", "union", "subtract", "intersect", "|", "gizmoMove", "gizmoRot", "align3d", "array3d"];

const STYLE_PICKERS = [
  ["textStyle", "文字样式"],
  ["dimStyle", "标注样式"],
  ["tableStyle", "表格样式"],
  ["leaderStyle", "多重引线样式"],
];

const QUANTITIES = [20, 21, 22, 23, 23, 23, 23, 23, 24, 24, 25, 26, 27, 28, 29];

const ROWS = QUANTITIES.map((qty, i) => [
  i + 1,
  `程晓白K${i + 1}`,
  `程晓白${String(i + 1).padStart(3, "0")}`,
  qty,
  i < 4 ? "合格" : "完成",
]);

const ARROWS = [
  [373, 126, 308, 88],
  [549, 126, 592, 90],
  [373, 267, 326, 309],
  [549, 267, 597, 305],
];

const GRIPS = [
  [373, 126, "#3f6fc4"],
  [548, 126, "#e3191c"],
  [373, 266, "#3f6fc4"],
  [548, 266, "#3f6fc4"],
];

/* ---------- page sections ---------- */

function AppHeader() {
  return (
    <Header>
      <LogoButton type="button" aria-label="应用程序菜单">
        <LogoArt viewBox="0 0 21 26" aria-hidden="true">
          <path d="M2 23 8 3l5-2 8 18-5 3-3-4-5 1-1 5z" fill="#c91d22" />
          <path d="M8 3l3 5-3 8-5 6z" fill="#ee5a5c" />
          <path d="M13 1l8 18-5 3-5-14z" fill="#a20f16" />
          <path d="M11 10l2 4H9z" fill="#f7b5b2" />
        </LogoArt>
        <Icon name="caret" size={8} />
      </LogoButton>
      <HeaderMain>
        <TitleBar>
          <GrayStrip>
            <Tools list={["newFile", "open", "save", "undo"]} />
            <Tool name="caret" w={7} size={8} label="撤销列表" />
            <Tool name="redo" bg="#dcdcdf" />
            <Tool name="caret" w={8} size={8} bg="#dcdcdf" label="重做列表" />
            <Tool name="print" w={15} />
            <Tool name="caretBar" w={8} size={7} label="自定义快速访问工具栏" />
          </GrayStrip>
          <Title>
            <span>AutoCAD 2010</span>
            <span>Drawing1.dwg</span>
          </Title>
          <SearchBox onSubmit={(e) => e.preventDefault()}>
            <Tool name="play" w={9} size={8} bg="#a5a5a8" label="折叠" />
            <SearchInput aria-label="搜索" placeholder="键入关键字或短语" />
          </SearchBox>
          <GrayStrip>
            <Tool name="binoculars" w={12} />
            <Tool name="caret" w={9} size={7} label="搜索选项" />
            <Tools list={["key", "satellite", "star", "helpRound"]} size={13} />
            <Tool name="caret" w={3} size={7} label="帮助选项" />
          </GrayStrip>
          <WindowControls>
            <Tool name="minimize" size={9} w={19} label="最小化" />
            <Tool name="restore" size={9} w={19} label="还原" />
            <Tool name="close" size={9} w={34} bg="#bdbdc0" label="关闭" />
          </WindowControls>
        </TitleBar>
        <MenuBar>
          {MENUS.map((m) => (
            <MenuButton key={m} type="button">{m}</MenuButton>
          ))}
          <DocControls>
            <Tool name="minimizeLight" size={9} w={12} label="最小化图形" />
            <Tool name="restoreLight" size={9} w={13} label="还原图形" />
            <Tool name="close" size={9} w={12} label="关闭图形" />
          </DocControls>
        </MenuBar>
      </HeaderMain>
    </Header>
  );
}

function ToolbarRows() {
  return (
    <ToolRows>
      <ToolRow>
        <Grip $w={5} />
        <Panel>
          <Tools list={STANDARD} />
        </Panel>
        <Grip />
        <Panel>
          {STYLE_PICKERS.map(([icon, label], i) => (
            <React.Fragment key={icon}>
              <Tool name={icon} bg="#f4e9e4" label={label} />
              <Dropdown w={91} line={i < 3} label={label} />
            </React.Fragment>
          ))}
        </Panel>
      </ToolRow>
      <ToolRow>
        <Grip $w={6} />
        <Panel $w={161}>
          <Dropdown w={127} pad={6} label="工作空间" value="AutoCAD 经典" />
          <Tool name="gear" />
          <Tool name="workspace" />
        </Panel>
        <Grip />
        <Panel $w={287}>
          <Tool name="layers" />
          <Divider />
          <Tool name="bulb" w={12} size={13} />
          <Tool name="sun" w={12} size={13} />
          <Tool name="vpFreeze" w={12} size={12} />
          <Tool name="lock" w={13} size={12} />
          <Dropdown w={166} pad={1} label="图层" value="0">
            <Swatch />
          </Dropdown>
          <Tools list={["layerMake", "layerPrev", "layerState"]} />
        </Panel>
        <Grip />
        <Panel>
          <Dropdown w={112} pad={4} line mono label="颜色" value="ByLayer"><Swatch /></Dropdown>
          <Dropdown w={122} pad={6} line mono label="线型" value="ByLayer"><LineSample $w={44} /></Dropdown>
          <Dropdown w={96} pad={6} line mono label="线宽" value="ByLayer"><LineSample $w={26} /></Dropdown>
          <Dropdown w={89} pad={9} mono label="打印样式" value="BYCOLOR" />
        </Panel>
      </ToolRow>
    </ToolRows>
  );
}

function Bom() {
  return (
    <BomTable>
      <thead>
        <tr><th colSpan={5}>程晓白Bom表</th></tr>
        <tr>
          {["序号", "品名/名称", "规格/mm", "数量/个", "备注"].map((h) => <th key={h}>{h}</th>)}
        </tr>
      </thead>
      <tbody>
        {ROWS.map((row) => (
          <tr key={row[0]}>
            {row.map((cell, i) => <td key={i}>{cell}</td>)}
          </tr>
        ))}
      </tbody>
      <tfoot>
        <tr>{[0, 1, 2, 3, 4].map((i) => <td key={i} />)}</tr>
      </tfoot>
    </BomTable>
  );
}

function DrawingCanvas() {
  return (
    <Canvas aria-label="图形">
      <Bom />
      <Drawing aria-hidden="true">
        <defs>
          <marker id="head" markerUnits="userSpaceOnUse" markerWidth="10" markerHeight="10" refX="9" refY="5" orient="auto">
            <path d="M0 0 10 5 0 10z" fill="#ee1519" />
          </marker>
        </defs>
        <path d="M373.500 126V74.500H613.500V266.500H549" fill="none" stroke="#d9dcdc" />
        <path d="M613.500 56v18M588 81.500h50M549 126.500h64" fill="none" stroke="#b32024" />
        {ARROWS.map(([x1, y1, x2, y2]) => (
          <line key={x2} x1={x1} y1={y1} x2={x2} y2={y2} stroke="#d8262b" strokeWidth="1.5" markerEnd="url(#head)" />
        ))}
        {GRIPS.map(([x, y, fill]) => (
          <rect key={`${x}-${y}`} x={x - 3} y={y - 3} width="7" height="7" fill={fill} stroke="#24406f" strokeWidth="0.5" />
        ))}
      </Drawing>
      <Floating role="toolbar" aria-label="建模">
        <Grip $w={5} />
        <Tools list={MODELING} />
        <FloatEnd type="button" aria-label="关闭工具栏"><Icon name="close" size={6} /></FloatEnd>
      </Floating>
      <Tooltip>正交: 149.3001 &lt; 0°</Tooltip>
      <Ucs viewBox="0 0 78 78" aria-hidden="true">
        <g fill="none" stroke="#d6d6d6">
          <path d="M11.500 28v33M8.500 61.500h7v7h-7zM16 65.500h32M7.500 28.500h8L11.500 20zM48.500 62v7l9-3.500zM11.500 22v6M48 65.500h8" />
          <path d="M8.500 4.500 12.500 9l4-4.500M12.500 9v5M64.500 61.500l7 8.500M71.500 61.500l-7 8.500" />
        </g>
      </Ucs>
    </Canvas>
  );
}

const TabSlash = () => (
  <Slash viewBox="0 0 5 11" aria-hidden="true">
    <path d="M5 0 0 11" stroke="#444" />
  </Slash>
);

const SHEET_NAV = [["first", "第一个"], ["prev", "上一个"], ["next", "下一个"], ["last", "最后一个"]];

function DocumentArea() {
  return (
    <Document>
      <CanvasRow>
        <DrawingCanvas />
        <VScroll>
          <Tool name="chevronUp" w={14} size={8} label="向上滚动" />
          <Thumb />
          <ScrollEnd>
            <Tool name="chevronDown" w={14} size={8} label="向下滚动" />
          </ScrollEnd>
        </VScroll>
      </CanvasRow>
      <SheetRow>
        {SHEET_NAV.map(([n, label]) => (
          <NavButton key={n} type="button" aria-label={label}><Icon name={n} size={8} /></NavButton>
        ))}
        <SheetTab type="button" $active>模型</SheetTab>
        <SheetTab type="button">布局1</SheetTab>
        <TabSlash />
        <SheetTab type="button">布局2</SheetTab>
        <TabSlash />
        <HScroll><Icon name="chevronLeft" size={8} /></HScroll>
      </SheetRow>
    </Document>
  );
}

function CommandWindow() {
  return (
    <Command aria-label="命令行">
      <CommandGrip />
      <CommandBody>
        <History>{"命令:\n** 拉伸 **"}</History>
        <Prompt aria-label="命令" defaultValue="指定拉伸点或 [基点(B)/复制(C)/放弃(U)/退出(X)]:" />
      </CommandBody>
      <CommandScroll>
        <Tool name="chevronUp" w={11} size={8} label="上一行" />
        <Tool name="chevronDown" w={11} size={8} label="下一行" />
      </CommandScroll>
    </Command>
  );
}

export default function App() {
  return (
    <Window>
      <GlobalStyle />
      <AppHeader />
      <ToolbarRows />
      <Workspace>
        <Dock $w={22}>
          <VBar $end={2}><Tools list={DRAW} w={16} size={13} row /></VBar>
        </Dock>
        <DocumentArea />
        <Dock $w={24} $pad={4}>
          <VBar><Tools list={TEXT} w={16} size={14} row /></VBar>
          <VBar $top={7} $end={6}><Tools list={DIMENSION} w={16} size={14} row /></VBar>
        </Dock>
        <Dock $w={19}>
          <VBar><Tools list={MODIFY} w={16} size={13} row /></VBar>
          <VBar $top={7}><Tools list={["front", "back", "above", "under"]} w={16} size={13} row /></VBar>
        </Dock>
      </Workspace>
      <CommandWindow />
      <Meter />
      <Watermark>
        <Ears viewBox="0 0 32 9" aria-hidden="true">
          <ellipse cx="8" cy="9" rx="7" ry="9" fill="#b4b4b4" />
          <ellipse cx="24" cy="10" rx="7" ry="9" fill="#b4b4b4" />
        </Ears>
        <WatermarkLogo viewBox="0 0 35 36" aria-hidden="true">
          <g fill="none" stroke="#cfd4df" strokeWidth="2.6" strokeLinecap="round" strokeLinejoin="round">
            <path d="M2 5v24c0 5 5 6 9 4l18-10c5-3 5-8 0-11L13 3C9 1 7 2 7 6v21c0 2 2 3 4 2" />
          </g>
          <path d="M14 13v8l6-4zM22 14v6" fill="#cfd4df" stroke="#cfd4df" strokeWidth="1.5" />
        </WatermarkLogo>
        <WatermarkText>
          <strong>溜溜自学</strong>
          <span>zixue.3D66.COM</span>
        </WatermarkText>
      </Watermark>
    </Window>
  );
}
